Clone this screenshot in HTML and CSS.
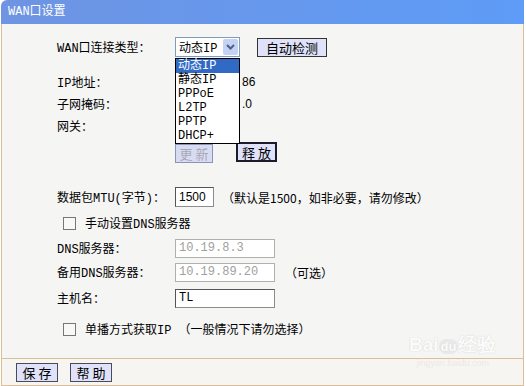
FILE: index.html
```html
<!DOCTYPE html>
<html>
<head>
	<meta charset="UTF-8">
	<title>WAN口设置</title>
	<link rel="stylesheet" href="styles.css">
</head>
<body>

<div class="page">
	<div class="head">WAN口设置</div>

	<div class="main">
		<div class="row r1">
			<span class="label">WAN口连接类型：</span>
			<div class="select">
				<span class="select-val">动态IP</span>
				<span class="select-btn">
					<svg width="9" height="6" viewBox="0 0 9 6"><path d="M1 1 L4.5 4.5 L8 1" fill="none" stroke="#4d6185" stroke-width="2"/></svg>
				</span>
				<ul class="menu">
					<li class="on">动态IP</li>
					<li>静态IP</li>
					<li>PPPoE</li>
					<li>L2TP</li>
					<li>PPTP</li>
					<li>DHCP+</li>
				</ul>
			</div>
			<span class="btn btn-detect">自动检测</span>
		</div>

		<div class="row"><span class="label">IP地址：</span><span class="behind">86</span></div>
		<div class="row"><span class="label">子网掩码：</span><span class="behind">.0</span></div>
		<div class="row"><span class="label">网关：</span></div>

		<div class="row r5">
			<span class="label"></span>
			<span class="btn btn-off">更 新</span>
			<span class="btn btn-focus">释 放</span>
		</div>

		<div class="row r6">
			<span class="label">数据包MTU(字节)：</span>
			<span class="input input-mtu">1500</span>
			<span class="note">（默认是1500，如非必要，请勿修改）</span>
		</div>

		<div class="row r7">
			<span class="check"></span>
			<span>手动设置DNS服务器</span>
		</div>

		<div class="row r8">
			<span class="label">DNS服务器：</span>
			<span class="input input-off">10.19.8.3</span>
		</div>

		<div class="row r9">
			<span class="label">备用DNS服务器：</span>
			<span class="input input-off">10.19.89.20</span>
			<span class="note">（可选）</span>
		</div>

		<div class="row r9">
			<span class="label">主机名：</span>
			<span class="input input-host">TL</span>
		</div>

		<div class="row r11">
			<span class="check"></span>
			<span>单播方式获取IP （一般情况下请勿选择）</span>
		</div>
	</div>

	<div class="foot">
		<span class="btn btn-foot">保 存</span>
		<span class="btn btn-foot">帮 助</span>
	</div>

	<div class="mark">
		<div class="mark-big">Bai<span class="mark-du">du</span>经验</div>
		<div class="mark-small">jingyan.baidu.com</div>
	</div>
</div>

</body>
</html>
```

FILE: styles.css
```css
body{
	margin: 0;
	background-color: #fff;
	font-family: "Liberation Mono", "Noto Sans CJK SC", monospace;
	font-size: 12px;
	color: #000;
}

.page{
	position: relative;
	width: 523px;
	margin-left: 1px;
}

.head{
	height: 24px;
	line-height: 24px;
	padding-left: 7px;
	color: #fff;
	border-radius: 6px 0 0 0;
	background: linear-gradient(to right, #6e94e2, #5e9cf7);
}

.main{
	height: 322px;
	padding-top: 12px;
	border-left: 1px solid #dcbf96;
	border-right: 1px solid #dcbf96;
	background-color: #f5f5f4;
}

.row{
	display: flex;
	align-items: center;
	height: 22px;
	padding-left: 55px;
}
.label{
	width: 118px;
	flex: none;
}
.r1{
	margin-bottom: 13px;
}
.r5{
	height: 32px;
}
.r6{
	height: 24px;
	margin-top: 16px;
}
.r7{
	height: 28px;
}
.r9{
	height: 26px;
}
.r11{
	height: 36px;
}

/* the part of the values the open list leaves visible */
.behind{
	margin-left: 67px;
	font-family: "Liberation Sans", sans-serif;
}

/* select + open list */
.select{
	position: relative;
	display: flex;
	align-items: center;
	width: 63px;
	height: 18px;
	border: 1px solid #7f9db9;
	background-color: #fff;
}
.select-val{
	flex: 1;
	padding-left: 3px;
}
.select-btn{
	display: flex;
	align-items: center;
	justify-content: center;
	width: 15px;
	height: 16px;
	margin-right: 1px;
	background-color: #c4d3f5;
	border-radius: 2px;
}
.menu{
	position: absolute;
	top: 20px;
	left: -1px;
	width: 63px;
	margin: 0;
	padding: 0;
	list-style: none;
	border: 1px solid #000;
	background-color: #fff;
	z-index: 2;
}
.menu li{
	height: 14px;
	line-height: 14px;
	padding-left: 2px;
}
.menu li.on{
	background-color: #316ac5;
	color: #fff;
}

/* buttons */
.btn{
	display: inline-flex;
	align-items: center;
	justify-content: center;
	height: 17px;
	font-family: "Noto Sans CJK SC", sans-serif;
	font-size: 13px;
	background-color: #dfe2f8;
	border: 1px solid #333;
}
.btn-detect{
	width: 68px;
	margin-left: 17px;
}
.btn-off{
	width: 36px;
	color: #a8a8b8;
	background-color: #d8dcf2;
	border-color: #8d93b6;
}
.btn-focus{
	width: 37px;
	height: 16px;
	margin-left: 23px;
	margin-top: -2px;
	border: 2px solid #1c1c2a;
}

/* inputs */
.input{
	display: flex;
	align-items: center;
	height: 17px;
	padding-left: 3px;
	background-color: #fff;
	border: 1px solid #8c8c8c;
	border-top-color: #555;
	border-left-color: #555;
}
.input-mtu{
	width: 34px;
	height: 18px;
	font-family: "Liberation Sans", sans-serif;
}
.input-off{
	width: 95px;
	color: #a0a0a0;
	border-color: #b0b0b0;
}
.input-host{
	width: 95px;
}
.note{
	margin-left: 8px;
	font-family: "Noto Sans CJK SC", sans-serif;
}
.r9 .note{
	margin-left: 10px;
}

.check{
	width: 11px;
	height: 11px;
	margin-left: 6px;
	margin-right: 9px;
	border: 1px solid #777;
	background-color: #f8f8f8;
}

.foot{
	display: flex;
	align-items: center;
	gap: 12px;
	height: 26px;
	padding-left: 14px;
	border: 1px solid #dcbf96;
	background-color: #f7f5f2;
}
.btn-foot{
	width: 40px;
	height: 17px;
	border-color: #4a4a5a;
}

/* watermark */
.mark{
	position: absolute;
	left: 408px;
	top: 334px;
	color: #fff;
	text-align: center;
	font-family: "Liberation Sans", sans-serif;
	opacity: 0.6;
}
.mark-big{
	font-size: 19px;
	font-weight: bold;
	line-height: 22px;
	text-shadow: 0 0 1px #c8c8c8, 0 0 1px #c8c8c8;
}
.mark-du{
	font-size: 13px;
	padding: 0 2px;
	border-radius: 7px;
	background-color: #e2e2e2;
}
.mark-small{
	font-size: 9px;
	color: #e6e2de;
}
```
